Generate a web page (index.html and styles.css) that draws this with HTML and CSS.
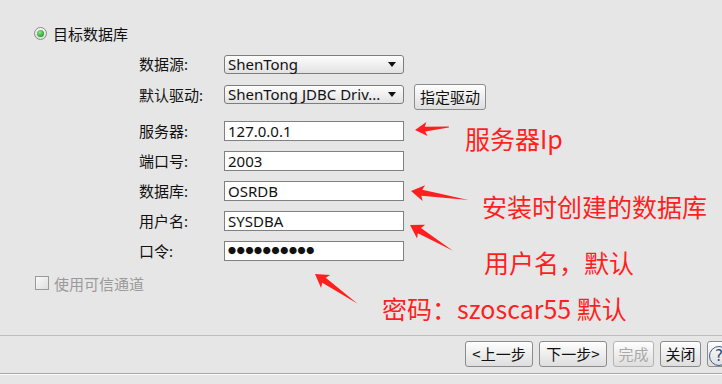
FILE: index.html
```html
<!DOCTYPE html>
<html lang="zh-CN">
<head>
    <meta charset="UTF-8">
    <title>目标数据库</title>
    <link rel="stylesheet" href="styles.css">
</head>
<body>
    <div class="content">
        <label class="radio-row">
            <span class="radio"><span class="radio-dot"></span></span>
            <span>目标数据库</span>
        </label>

        <div class="form">
            <div class="row row-select">
                <span class="label">数据源:</span>
                <div class="select"><span>ShenTong</span><i class="caret"></i></div>
            </div>
            <div class="row row-driver">
                <span class="label">默认驱动:</span>
                <div class="select"><span>ShenTong JDBC Driv...</span><i class="caret"></i></div>
                <button class="btn btn-driver">指定驱动</button>
            </div>
            <div class="row">
                <span class="label">服务器:</span>
                <div class="field">127.0.0.1</div>
            </div>
            <div class="row">
                <span class="label">端口号:</span>
                <div class="field">2003</div>
            </div>
            <div class="row">
                <span class="label">数据库:</span>
                <div class="field">OSRDB</div>
            </div>
            <div class="row">
                <span class="label">用户名:</span>
                <div class="field">SYSDBA</div>
            </div>
            <div class="row">
                <span class="label">口令:</span>
                <div class="field field-pass">●●●●●●●●●●</div>
            </div>
        </div>

        <label class="check-row">
            <span class="checkbox"></span>
            <span>使用可信通道</span>
        </label>
    </div>

    <div class="footer">
        <button class="btn btn-wide">&lt;上一步</button>
        <button class="btn btn-wide">下一步&gt;</button>
        <button class="btn btn-small" disabled>完成</button>
        <button class="btn btn-small">关闭</button>
        <button class="btn btn-help"><span class="help">?</span></button>
    </div>
    <div class="bottom-line"></div>

    <!-- red annotations drawn over the dialog -->
    <svg class="arrows" width="722" height="384" viewBox="0 0 722 384">
        <g fill="#ff1f1f">
            <g transform="translate(415,130) rotate(-5)"><polygon points="0,0 12,-7 10,-2.5 34,-0.5 34,0.5 10,2.5 12,7"/></g>
            <g transform="translate(411,191) rotate(9)"><polygon points="0,0 13,-8 11,-3 58,0 11,3 13,8"/></g>
            <g transform="translate(410,225) rotate(31)"><polygon points="0,0 13,-8 11,-3 50,0 11,3 13,8"/></g>
            <g transform="translate(315,274) rotate(35)"><polygon points="0,0 13,-8 11,-3 52,0 11,3 13,8"/></g>
        </g>
    </svg>
    <div class="note note-ip">服务器Ip</div>
    <div class="note note-db">安装时创建的数据库</div>
    <div class="note note-user">用户名，默认</div>
    <div class="note note-pass">密码：szoscar55 默认</div>
</body>
</html>
```

FILE: styles.css
```css
* {
    margin: 0;
    padding: 0;
    box-sizing: border-box;
}

body {
    width: 722px;
    height: 384px;
    overflow: hidden;
    position: relative;
    background: #e6e6e6;
    color: #111;
    font-family: 'Noto Sans', 'Noto Sans CJK SC', sans-serif;
    font-size: 15px;
}

.content {
    height: 335px;
    padding-top: 24px;
}

.radio-row {
    display: flex;
    align-items: center;
    gap: 6px;
    margin-left: 34px;
    height: 18px;
}

.radio {
    width: 13px;
    height: 13px;
    border-radius: 50%;
    border: 1px solid #8c8c8c;
    background: linear-gradient(#f4f4f4, #dcdcdc);
    display: flex;
    align-items: center;
    justify-content: center;
}

.radio-dot {
    width: 7px;
    height: 7px;
    border-radius: 50%;
    background: radial-gradient(circle at 40% 35%, #8ee68e, #23a623 70%);
}

.form {
    margin-left: 139px;
    margin-top: 12px;
}

.row {
    display: flex;
    align-items: center;
    height: 20px;
    margin-bottom: 10px;
}

.row-select {
    margin-bottom: 10px;
}

.row-driver {
    align-items: flex-start;
    height: 26px;
    margin-bottom: 11px;
}

.row-driver .label,
.row-driver .select {
    margin-top: 1px;
}

.label {
    width: 85px;
    line-height: 20px;
}

.select {
    width: 180px;
    height: 19px;
    border: 1px solid #7d7d7d;
    border-radius: 3px;
    background: linear-gradient(#fdfdfd, #e2e2e2);
    display: flex;
    align-items: center;
    justify-content: space-between;
    padding: 0 7px 0 3px;
    line-height: 17px;
    white-space: nowrap;
}

.caret {
    width: 0;
    height: 0;
    border-left: 4px solid transparent;
    border-right: 4px solid transparent;
    border-top: 5px solid #111;
}

.field {
    width: 180px;
    height: 20px;
    border: 1px solid #808080;
    background: #fff;
    padding: 0 3px;
    line-height: 18px;
}

.field-pass {
    font-family: 'Noto Sans CJK SC', sans-serif;
    font-size: 8px;
    letter-spacing: 0.7px;
    line-height: 18px;
}

.btn {
    font-family: 'Noto Sans CJK SC', sans-serif;
    font-size: 15px;
    color: #111;
    height: 26px;
    border: 1px solid #8c8c8c;
    border-radius: 3px;
    background: linear-gradient(#fefefe, #dedede);
    line-height: 24px;
}

.btn-driver {
    width: 72px;
    margin-left: 10px;
}

.check-row {
    display: flex;
    align-items: center;
    gap: 5px;
    margin-left: 35px;
    margin-top: 14px;
    color: #9a9a9a;
    height: 16px;
}

.checkbox {
    width: 14px;
    height: 14px;
    border: 1px solid #9a9a9a;
    background: linear-gradient(135deg, #fafafa, #dedede);
}

.footer {
    border-top: 1px solid #bdbdbd;
    padding: 5px 0 6px 465px;
    display: flex;
    gap: 6px;
    white-space: nowrap;
}

.btn-wide {
    width: 68px;
    flex: none;
}

.btn-small {
    width: 41px;
    flex: none;
}

.btn[disabled] {
    color: #a8a8a8;
    border-color: #b4b4b4;
}

.btn-help {
    width: 30px;
    flex: none;
    padding-left: 1px;
    text-align: left;
}

.help {
    display: inline-block;
    width: 20px;
    height: 20px;
    border: 1px solid #3f5a88;
    border-radius: 50%;
    line-height: 18px;
    text-align: center;
    color: #2c4675;
    font-family: 'DejaVu Sans', sans-serif;
    font-size: 15px;
    vertical-align: middle;
}

.bottom-line {
    border-top: 1px solid #a9a9a9;
    border-bottom: 1px solid #fafafa;
}

.arrows {
    position: absolute;
    left: 0;
    top: 0;
}

.note {
    position: absolute;
    color: #ff1f1f;
    font-family: 'Noto Sans CJK SC', sans-serif;
    font-size: 25px;
    line-height: 1;
    white-space: nowrap;
}

.note-ip { left: 465px; top: 126px; }
.note-db { left: 482px; top: 194px; }
.note-user { left: 484px; top: 250px; }
.note-pass { left: 382px; top: 296px; }
```
